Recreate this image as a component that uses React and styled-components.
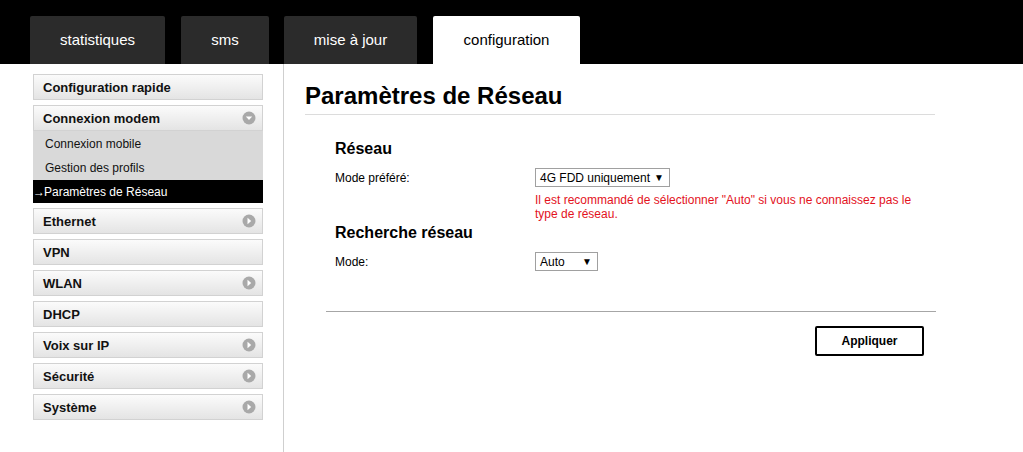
import styled, { createGlobalStyle } from "styled-components";

const Global = createGlobalStyle`
  body {
    margin: 0;
    background: #fff;
    font-family: "Liberation Sans", Arial, sans-serif;
    color: #000;
  }
`

const Header = styled.div`
  height: 64px;
  background: #000;
  display: flex;
  align-items: flex-end;
  padding-left: 30px;
  box-sizing: border-box;
`
const Tab = styled.div`
  height: 48px;
  width: ${props => props.w}px;
  margin-right: ${props => props.gap}px;
  background: ${props => props.active ? "#fff" : "#2b2b2b"};
  color: ${props => props.active ? "#000" : "#fff"};
  border-radius: 2px 2px 0 0;
  display: flex;
  align-items: center;
  justify-content: center;
  font-size: 15px;
  padding-bottom: 1px;
  box-sizing: border-box;
`

const Body = styled.div`
  display: flex;
  height: 388px;
`
const Sidebar = styled.div`
  width: 250px;
  padding: 10px 0 0 33px;
  border-right: 1px solid #cfcfcf;
  display: flex;
  flex-direction: column;
`
const MenuGroup = styled.div`
  width: 230px;
  margin-bottom: 5px;
`
const MenuItem = styled.div`
  height: 26px;
  box-sizing: border-box;
  border: 1px solid #d2d2d2;
  background: linear-gradient(#fbfbfb, #e4e4e4);
  display: flex;
  align-items: center;
  justify-content: space-between;
  padding: 0 6px 0 9px;
  font-size: 13px;
  font-weight: bold;
  color: #111;
`
const SubList = styled.div`
  background: #d9d9d9;
  display: flex;
  flex-direction: column;
`
const SubItem = styled.div`
  height: ${props => props.h}px;
  display: flex;
  align-items: center;
  padding-left: ${props => props.active ? 0 : 12}px;
  font-size: 12px;
  background: ${props => props.active ? "#000" : "transparent"};
  color: ${props => props.active ? "#fff" : "#111"};
`
const Arrow = styled.span`
  font-size: 12px;
  margin-right: -1px;
`

const Main = styled.div`
  flex: 1;
  padding: 15px 0 0 21px;
`
const Title = styled.h1`
  margin: 0;
  width: 630px;
  font-size: 24px;
  font-weight: bold;
  padding: 3px 0 4px;
  border-bottom: 1px solid #dcdcdc;
`
const Section = styled.div`
  padding-left: 30px;
  width: 600px;
`
const SectionTitle = styled.h2`
  margin: ${props => props.top}px 0 0;
  font-size: 16px;
  font-weight: bold;
  line-height: 20px;
`
const Row = styled.div`
  display: grid;
  grid-template-columns: 200px 1fr;
  align-items: center;
  margin-top: ${props => props.top}px;
  font-size: 12px;
`
const Select = styled.div`
  width: ${props => props.w}px;
  height: 19px;
  box-sizing: border-box;
  border: 1px solid #a0a0a0;
  display: flex;
  align-items: center;
  justify-content: space-between;
  padding: 0 5px 0 4px;
  font-size: 12px;
  color: #000;
`
const Caret = styled.span`
  font-size: 10px;
`
const Warning = styled.div`
  grid-column: 2;
  color: #e3121d;
  font-size: 12px;
  line-height: 14px;
  margin-top: 6px;
`
const Divider = styled.div`
  margin: 40px 0 0 21px;
  width: 610px;
  border-top: 1px solid #a6a6a6;
`
const Actions = styled.div`
  width: 619px;
  display: flex;
  justify-content: flex-end;
  margin-top: 14px;
`
const Button = styled.div`
  width: 109px;
  height: 30px;
  box-sizing: border-box;
  border: 2px solid #000;
  border-radius: 2px;
  display: flex;
  align-items: center;
  justify-content: center;
  font-size: 12px;
  font-weight: bold;
`

const Circle = ({ down }) => (
  <svg width="14" height="14" viewBox="0 0 14 14">
    <circle cx="7" cy="7" r="6.5" fill="#a9a9a9" />
    {down
      ? <polygon points="3.8,5.5 10.2,5.5 7,9" fill="#fff" />
      : <polygon points="5.5,3.8 9.2,7 5.5,10.2" fill="#fff" />}
  </svg>
)

const tabs = [
  { label: "statistiques", w: 135, gap: 16 },
  { label: "sms", w: 88, gap: 15 },
  { label: "mise à jour", w: 133, gap: 16 },
  { label: "configuration", w: 147, gap: 0, active: true },
]

const menu = [
  { label: "Ethernet", arrow: true },
  { label: "VPN" },
  { label: "WLAN", arrow: true },
  { label: "DHCP" },
  { label: "Voix sur IP", arrow: true },
  { label: "Sécurité", arrow: true },
  { label: "Système", arrow: true },
]

const App = () => {
  return (
    <>
      <Global />
      <Header>
        {tabs.map(t => (
          <Tab key={t.label} w={t.w} gap={t.gap} active={t.active}>{t.label}</Tab>
        ))}
      </Header>
      <Body>
        <Sidebar>
          <MenuGroup>
            <MenuItem>Configuration rapide</MenuItem>
          </MenuGroup>
          <MenuGroup>
            <MenuItem>Connexion modem <Circle down /></MenuItem>
            <SubList>
              <SubItem h={25}>Connexion mobile</SubItem>
              <SubItem h={24}>Gestion des profils</SubItem>
              <SubItem h={23} active><Arrow>→</Arrow>Paramètres de Réseau</SubItem>
            </SubList>
          </MenuGroup>
          {menu.map(m => (
            <MenuGroup key={m.label}>
              <MenuItem>{m.label}{m.arrow && <Circle />}</MenuItem>
            </MenuGroup>
          ))}
        </Sidebar>
        <Main>
          <Title>Paramètres de Réseau</Title>
          <Section>
            <SectionTitle top={24}>Réseau</SectionTitle>
            <Row top={9}>
              <span>Mode préféré:</span>
              <Select w={135}>4G FDD uniquement <Caret>▼</Caret></Select>
              <Warning>Il est recommandé de sélectionner "Auto" si vous ne connaissez pas le type de réseau.</Warning>
            </Row>
            <SectionTitle top={2}>Recherche réseau</SectionTitle>
            <Row top={9}>
              <span>Mode:</span>
              <Select w={63}>Auto <Caret>▼</Caret></Select>
            </Row>
          </Section>
          <Divider />
          <Actions>
            <Button>Appliquer</Button>
          </Actions>
        </Main>
      </Body>
    </>
  )
}

export default App
